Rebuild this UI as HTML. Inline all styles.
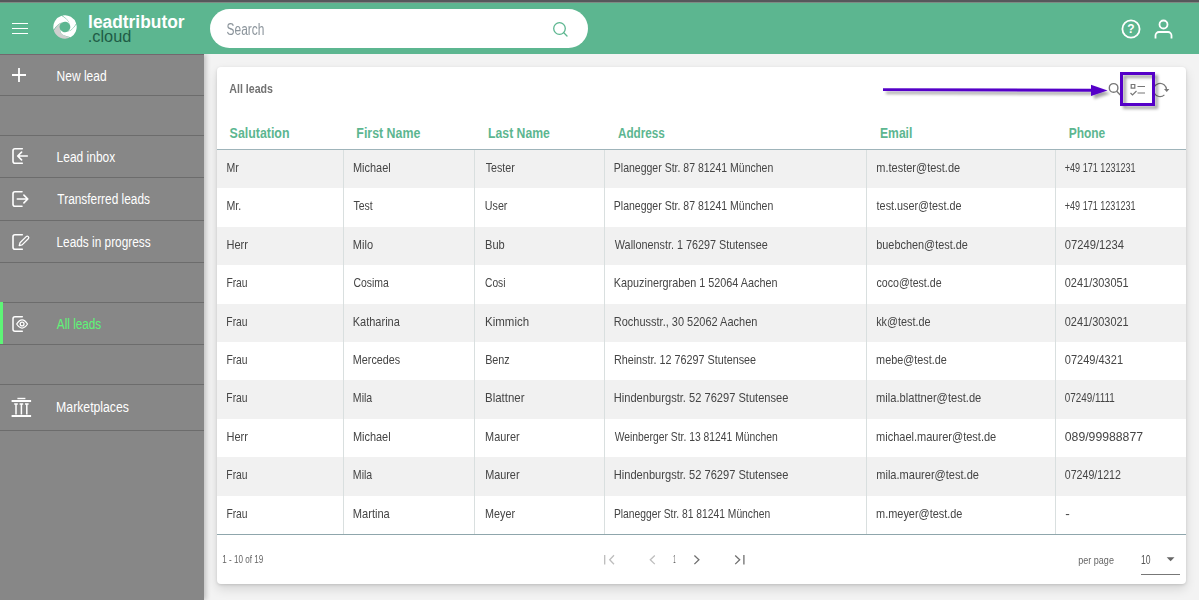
<!DOCTYPE html>
<html lang="en"><head><meta charset="utf-8"><title>leadtributor.cloud - All leads</title>
<style>
*{box-sizing:border-box;margin:0;padding:0}
html,body{width:1199px;height:600px;overflow:hidden}
body{background:#f3f3f3;font-family:"Liberation Sans", sans-serif;position:relative;color:#454545}
.t{display:inline-block;white-space:nowrap;transform-origin:0 50%}
.topstrip{position:absolute;left:0;top:0;width:1199px;height:3px;background:#56575b;border-bottom:1px solid #7f8a84;z-index:6}
header{position:absolute;left:0;top:2px;width:1199px;height:52px;background:#5cb690;z-index:5}
header:after{content:'';position:absolute;left:0;top:51.600px;width:204px;height:1.300px;background:rgba(70,40,60,.32)}
.burger{position:absolute;left:12px;top:20.500px;width:16px;height:12px}
.burger i{position:absolute;left:0;width:16px;height:1.600px;background:#fff}
.logo{position:absolute;left:51.700px;top:12px}
.brand1{position:absolute;left:88.800px;top:9.800px;font-size:18px;font-weight:700;color:#fff;line-height:20px}
.brand2{position:absolute;left:88.800px;top:24.500px;font-size:16px;color:#1f5c46;line-height:20px}
.search{will-change:transform;position:absolute;left:210px;top:7px;width:378px;height:39px;border-radius:20px;background:#fff}
.search .ph{position:absolute;left:16.600px;top:1.300px;line-height:40px;font-size:16px;color:#8b949b}
.search svg{position:absolute;left:340px;top:9.500px}
.hicons svg{position:absolute}
nav{position:absolute;left:0;top:54px;width:204px;height:546px;background:#878787;box-shadow:2px 0 5px rgba(0,0,0,.22);z-index:3}
.nav{position:absolute;left:0;width:204px;display:block;color:#fff;font-size:15.5px}
nav .nav{margin-top:-54px}
.nav .ic{position:absolute;left:3px;top:50%;height:32px;transform:translateY(-50%)}
.nav .lb{position:absolute;left:56.800px;top:0;height:100%;display:flex;align-items:center}
.nav.active{color:#5ef577;border-left:3px solid #5ef577}
.nav.active .ic{left:0}
.nav.active .lb{left:53.800px}
.dv{position:absolute;left:0;width:204px;height:1.200px;background:#6c6c6c;margin-top:-54px}
.card{position:absolute;left:217px;top:67px;width:969px;height:516.500px;background:#fff;border-radius:4px;
  box-shadow:0 1px 3px rgba(0,0,0,.13),0 5px 11px rgba(0,0,0,.12)}
.title{position:absolute;left:12.300px;top:12px;line-height:20px;font-size:13px;font-weight:700;color:#727272}
table{position:absolute;left:0;top:48px;width:969px;display:block;border-collapse:collapse}
thead,tbody{display:block}
tbody,.foot,.title{will-change:transform}
tr{display:flex;width:969px}
th,td{display:flex;align-items:center;flex:0 0 auto;text-align:left}
th:nth-child(1),td:nth-child(1){width:126.300px}
th:nth-child(2),td:nth-child(2){width:130.900px}
th:nth-child(3),td:nth-child(3){width:130.100px}
th:nth-child(4),td:nth-child(4){width:261.900px}
th:nth-child(5),td:nth-child(5){width:188.800px}
th:nth-child(6),td:nth-child(6){width:131px}
thead tr{height:35.200px;border-bottom:1.400px solid #9fb4ba}
th{padding:1.800px 0 0 12.500px;font-size:14px;font-weight:700;color:#5cb690}
tbody tr{height:38.400px}
td{padding:0 0 2.200px 8.800px;font-size:13px;border-left:1px solid #d9dfdf;line-height:16px}
td:first-child{border-left:0;padding-left:9.800px}
tbody tr:nth-child(odd){background:#f1f1f1}
.foot{position:absolute;left:0;top:467px;width:969px;height:49px;border-top:1px solid #8fa6ac}
.foot .t{position:absolute;line-height:14px;font-size:10.500px;color:#666}
.foot svg{position:absolute;left:0;top:0}
.anno{position:absolute;left:0;top:0;z-index:9}
</style></head><body>
<div class="topstrip"></div>
<header>
  <div class="burger"><i style="top:0"></i><i style="top:5px"></i><i style="top:10px"></i></div>
  <svg class="logo" width="26" height="26" viewBox="-13 -13 26 26"><path d="M4.96,10.60 A11.7,11.7 0 0 1 -11.18,3.46 Q-6.92,-3.82 -3.06,-4.33 A5.3,5.3 0 0 0 -4.68,2.50 Q-6.54,7.29 4.96,10.60Z" fill="#cfcfcf"/><path d="M-11.38,2.71 A11.7,11.7 0 0 1 -3.46,-11.18 Q3.82,-6.92 4.33,-3.06 A5.3,5.3 0 0 0 -2.76,-4.52 Q-6.65,-4.27 -11.38,2.71Z" fill="#fff"/><path d="M-2.71,-11.38 A11.7,11.7 0 0 1 11.18,-3.46 Q6.92,3.82 3.06,4.33 A5.3,5.3 0 0 0 4.52,-2.76 Q4.27,-6.65 -2.71,-11.38Z" fill="#fff"/><path d="M11.38,-2.71 A11.7,11.7 0 0 1 5.65,10.24 Q-6.05,7.71 -4.50,2.80 A5.3,5.3 0 0 0 2.76,4.52 Q6.65,4.27 11.38,-2.71Z" fill="#fff"/></svg>
  <div class="brand1"><span class="t" id="t73" style="transform:translateX(-0.93px) scaleX(0.9646);">leadtributor</span></div>
  <div class="brand2"><span class="t" id="t74" style="transform:translateX(-1.26px) scaleX(1.0200);">.cloud</span></div>
  <div class="search"><span class="ph"><span class="t" id="t75" style="transform:translateX(-0.39px) scaleX(0.7451);">Search</span></span>
    <svg width="20" height="20" viewBox="0 0 20 20"><circle cx="9.500" cy="9.500" r="5.800" fill="none" stroke="#5cb690" stroke-width="1.300"/><path d="M13.800 13.800L17 17" stroke="#5cb690" stroke-width="1.300" stroke-linecap="round"/></svg>
  </div>
  <div class="hicons">
    <svg style="left:1120px;top:15.500px" width="22" height="22" viewBox="0 0 22 22"><circle cx="11" cy="11" r="8.600" fill="none" stroke="#fff" stroke-width="1.800"/><text x="11" y="15.300" text-anchor="middle" font-family='"Liberation Sans",sans-serif' font-size="12" font-weight="700" fill="#fff">?</text></svg>
    <svg style="left:1152px;top:14.500px" width="24" height="24" viewBox="0 0 24 24"><g fill="none" stroke="#fff" stroke-width="1.800"><circle cx="11.500" cy="7.500" r="4"/><path d="M3.500 21.500v-3a3.500 3.500 0 0 1 3.500-3.500h9a3.500 3.500 0 0 1 3.500 3.500v3"/></g></svg>
  </div>
</header>
<nav><i class="dv" style="top:95px"></i><i class="dv" style="top:135.3px"></i><i class="dv" style="top:177px"></i><i class="dv" style="top:219.8px"></i><i class="dv" style="top:261.8px"></i><i class="dv" style="top:301.8px"></i><i class="dv" style="top:343.8px"></i><i class="dv" style="top:383.8px"></i><i class="dv" style="top:429.8px"></i><a class="nav" style="top:54px;height:41.5px"><span class="ic" style="margin-top:0px"><svg width="32" height="32" viewBox="0 0 32 32"><path d="M9 16H23M16 9V23" stroke="#fff" stroke-width="1.8" fill="none"/></svg></span><span class="lb" style="margin-top:1.7px"><span class="t" id="t67" style="transform:translateX(-0.42px) scaleX(0.7736);">New lead</span></span></a><a class="nav" style="top:135.8px;height:41.7px"><span class="ic" style="margin-top:-0.7px"><svg width="32" height="32" viewBox="0 0 32 32"><g stroke="#fff" stroke-width="1.6" fill="none" stroke-linecap="round" stroke-linejoin="round"><path d="M19.300 8.700H12a2 2 0 0 0-2 2v10.600a2 2 0 0 0 2 2h7.300"/><path d="M24.300 16H14.800M18.600 12.100l-3.900 3.900 3.900 3.900"/></g></svg></span><span class="lb" style="margin-top:0px"><span class="t" id="t68" style="transform:translateX(-0.39px) scaleX(0.7725);">Lead inbox</span></span></a><a class="nav" style="top:177.5px;height:42.8px"><span class="ic" style="margin-top:0px"><svg width="32" height="32" viewBox="0 0 32 32"><g stroke="#fff" stroke-width="1.6" fill="none" stroke-linecap="round" stroke-linejoin="round"><path d="M19 8.700H12a2 2 0 0 0-2 2v10.600a2 2 0 0 0 2 2h7"/><path d="M14.300 16H24.500M20.900 12.100l3.900 3.900-3.900 3.900"/></g></svg></span><span class="lb" style="margin-top:0px"><span class="t" id="t69" style="transform:translateX(0.37px) scaleX(0.7657);">Transferred leads</span></span></a><a class="nav" style="top:220.3px;height:42px"><span class="ic" style="margin-top:0.6px"><svg width="32" height="32" viewBox="0 0 32 32"><g stroke="#fff" stroke-width="1.6" fill="none" stroke-linecap="round" stroke-linejoin="round"><path d="M19.300 8.700H12a2 2 0 0 0-2 2v10.600a2 2 0 0 0 2 2h7.300"/><path d="M16.200 19.700l.800-2.900 6.200-6.200a1.450 1.450 0 0 1 2.100 2.100l-6.200 6.200z" stroke-width="1.300"/></g></svg></span><span class="lb" style="margin-top:1px"><span class="t" id="t70" style="transform:translateX(-0.54px) scaleX(0.7643);">Leads in progress</span></span></a><a class="nav active" style="top:302.3px;height:42px"><span class="ic" style="margin-top:0.7px"><svg width="32" height="32" viewBox="0 0 32 32"><g stroke="#fff" stroke-width="1.500" fill="none" stroke-linecap="round" stroke-linejoin="round"><path d="M19.300 8.700H12a2 2 0 0 0-2 2v10.600a2 2 0 0 0 2 2h7.300"/><path d="M13.700 16q5.400-8.200 10.800 0q-5.400 8.200-10.800 0z" stroke-width="1.300"/><circle cx="19.100" cy="16" r="1.900" stroke-width="1.300"/></g></svg></span><span class="lb" style="margin-top:0.7px"><span class="t" id="t71" style="transform:translateX(-0.13px) scaleX(0.7574);">All leads</span></span></a><a class="nav" style="top:384.3px;height:46px"><span class="ic" style="margin-top:0px"><svg width="32" height="32" viewBox="1.100 0 32 32"><g stroke="#fff" fill="none"><path d="M15.500 7.500h8" stroke-width="1.400"/><path d="M9.700 10h19.500M9.700 25h19.500" stroke-width="1.800"/><path d="M12.300 13h3.600M17.700 13h3.600M23.100 13h3.600" stroke-width="1.400"/><path d="M14.100 13v10.500M19.500 13v10.500M24.900 13v10.500" stroke-width="1.500"/></g></svg></span><span class="lb" style="margin-top:0px"><span class="t" id="t72" style="transform:translateX(-0.88px) scaleX(0.7898);">Marketplaces</span></span></a></nav>
<main class="card">
  <div class="title"><span class="t" id="t76" style="transform:translateX(0.30px) scaleX(0.8176);">All leads</span></div>
  <table>
        <thead><tr><th><span class="t" id="t1" style="transform:translateX(-0.38px) scaleX(0.8849);">Salutation</span></th><th><span class="t" id="t2" style="transform:translateX(0.34px) scaleX(0.8844);">First Name</span></th><th><span class="t" id="t3" style="transform:translateX(1.11px) scaleX(0.8713);">Last Name</span></th><th><span class="t" id="t4" style="transform:translateX(0.92px) scaleX(0.8378);">Address</span></th><th><span class="t" id="t5" style="transform:translateX(1.02px) scaleX(0.8657);">Email</span></th><th><span class="t" id="t6" style="transform:translateX(1.63px) scaleX(0.8564);">Phone</span></th></tr></thead><tbody><tr><td><span class="t" id="t7" style="transform:translateX(-0.46px) scaleX(0.8100);">Mr</span></td><td><span class="t" id="t8" style="transform:translateX(-0.09px) scaleX(0.8425);">Michael</span></td><td><span class="t" id="t9" style="transform:translateX(1.69px) scaleX(0.8209);">Tester</span></td><td><span class="t" id="t10" style="transform:translateX(-0.18px) scaleX(0.8081);">Planegger Str. 87 81241 München</span></td><td><span class="t" id="t11" style="transform:translateX(0.25px) scaleX(0.8460);">m.tester@test.de</span></td><td><span class="t" id="t12" style="transform:translateX(-0.22px) scaleX(0.6979);">+49 171 1231231</span></td></tr><tr><td><span class="t" id="t13" style="transform:translateX(-0.55px) scaleX(0.8165);">Mr.</span></td><td><span class="t" id="t14" style="transform:translateX(0.49px) scaleX(0.8056);">Test</span></td><td><span class="t" id="t15" style="transform:translateX(0.79px) scaleX(0.8251);">User</span></td><td><span class="t" id="t16" style="transform:translateX(-0.18px) scaleX(0.8080);">Planegger Str. 87 81241 München</span></td><td><span class="t" id="t17" style="transform:translateX(0.61px) scaleX(0.8324);">test.user@test.de</span></td><td><span class="t" id="t18" style="transform:translateX(-0.22px) scaleX(0.6966);">+49 171 1231231</span></td></tr><tr><td><span class="t" id="t19" style="transform:translateX(-0.59px) scaleX(0.8491);">Herr</span></td><td><span class="t" id="t20" style="transform:translateX(-0.21px) scaleX(0.8484);">Milo</span></td><td><span class="t" id="t21" style="transform:translateX(1.02px) scaleX(0.8502);">Bub</span></td><td><span class="t" id="t22" style="transform:translateX(0.82px) scaleX(0.8317);">Wallonenstr. 1 76297 Stutensee</span></td><td><span class="t" id="t23" style="transform:translateX(0.26px) scaleX(0.8375);">buebchen@test.de</span></td><td><span class="t" id="t24" style="transform:translateX(-0.22px) scaleX(0.8626);">07249/1234</span></td></tr><tr><td><span class="t" id="t25" style="transform:translateX(-0.62px) scaleX(0.7940);">Frau</span></td><td><span class="t" id="t26" style="transform:translateX(0.38px) scaleX(0.8035);">Cosima</span></td><td><span class="t" id="t27" style="transform:translateX(1.04px) scaleX(0.7848);">Cosi</span></td><td><span class="t" id="t28" style="transform:translateX(-0.16px) scaleX(0.8324);">Kapuzinergraben 1 52064 Aachen</span></td><td><span class="t" id="t29" style="transform:translateX(0.51px) scaleX(0.8162);">coco@test.de</span></td><td><span class="t" id="t30" style="transform:translateX(-0.21px) scaleX(0.8415);">0241/303051</span></td></tr><tr><td><span class="t" id="t31" style="transform:translateX(-0.64px) scaleX(0.7942);">Frau</span></td><td><span class="t" id="t32" style="transform:translateX(-0.28px) scaleX(0.8470);">Katharina</span></td><td><span class="t" id="t33" style="transform:translateX(1.10px) scaleX(0.8825);">Kimmich</span></td><td><span class="t" id="t34" style="transform:translateX(-0.20px) scaleX(0.8452);">Rochusstr., 30 52062 Aachen</span></td><td><span class="t" id="t35" style="transform:translateX(0.19px) scaleX(0.8329);">kk@test.de</span></td><td><span class="t" id="t36" style="transform:translateX(-0.21px) scaleX(0.8414);">0241/303021</span></td></tr><tr><td><span class="t" id="t37" style="transform:translateX(-0.62px) scaleX(0.7940);">Frau</span></td><td><span class="t" id="t38" style="transform:translateX(-0.14px) scaleX(0.8303);">Mercedes</span></td><td><span class="t" id="t39" style="transform:translateX(1.13px) scaleX(0.8318);">Benz</span></td><td><span class="t" id="t40" style="transform:translateX(-0.10px) scaleX(0.8297);">Rheinstr. 12 76297 Stutensee</span></td><td><span class="t" id="t41" style="transform:translateX(0.12px) scaleX(0.8347);">mebe@test.de</span></td><td><span class="t" id="t42" style="transform:translateX(-0.21px) scaleX(0.8476);">07249/4321</span></td></tr><tr><td><span class="t" id="t43" style="transform:translateX(-0.64px) scaleX(0.7942);">Frau</span></td><td><span class="t" id="t44" style="transform:translateX(-0.15px) scaleX(0.8135);">Mila</span></td><td><span class="t" id="t45" style="transform:translateX(0.99px) scaleX(0.8808);">Blattner</span></td><td><span class="t" id="t46" style="transform:translateX(-0.22px) scaleX(0.8536);">Hindenburgstr. 52 76297 Stutensee</span></td><td><span class="t" id="t47" style="transform:translateX(0.10px) scaleX(0.8547);">mila.blattner@test.de</span></td><td><span class="t" id="t48" style="transform:translateX(-0.17px) scaleX(0.7594);">07249/1111</span></td></tr><tr><td><span class="t" id="t49" style="transform:translateX(-0.59px) scaleX(0.8488);">Herr</span></td><td><span class="t" id="t50" style="transform:translateX(-0.10px) scaleX(0.8427);">Michael</span></td><td><span class="t" id="t51" style="transform:translateX(1.11px) scaleX(0.8378);">Maurer</span></td><td><span class="t" id="t52" style="transform:translateX(0.72px) scaleX(0.7949);">Weinberger Str. 13 81241 München</span></td><td><span class="t" id="t53" style="transform:translateX(0.01px) scaleX(0.8476);">michael.maurer@test.de</span></td><td><span class="t" id="t54" style="transform:translateX(-0.23px) scaleX(0.9413);">089/99988877</span></td></tr><tr><td><span class="t" id="t55" style="transform:translateX(-0.64px) scaleX(0.7942);">Frau</span></td><td><span class="t" id="t56" style="transform:translateX(-0.15px) scaleX(0.8135);">Mila</span></td><td><span class="t" id="t57" style="transform:translateX(1.14px) scaleX(0.8351);">Maurer</span></td><td><span class="t" id="t58" style="transform:translateX(-0.22px) scaleX(0.8536);">Hindenburgstr. 52 76297 Stutensee</span></td><td><span class="t" id="t59" style="transform:translateX(0.24px) scaleX(0.8498);">mila.maurer@test.de</span></td><td><span class="t" id="t60" style="transform:translateX(-0.21px) scaleX(0.8176);">07249/1212</span></td></tr><tr><td><span class="t" id="t61" style="transform:translateX(-0.62px) scaleX(0.7940);">Frau</span></td><td><span class="t" id="t62" style="transform:translateX(-0.21px) scaleX(0.8536);">Martina</span></td><td><span class="t" id="t63" style="transform:translateX(1.10px) scaleX(0.8294);">Meyer</span></td><td><span class="t" id="t64" style="transform:translateX(-0.08px) scaleX(0.7918);">Planegger Str. 81 81241 München</span></td><td><span class="t" id="t65" style="transform:translateX(0.10px) scaleX(0.8396);">m.meyer@test.de</span></td><td><span class="t" id="t66" style="transform:translateX(0.26px) scaleX(1.0467);">-</span></td></tr></tbody>
  </table>
  <div class="foot">
    <span class="t" id="t77" style="transform:translateX(-0.81px) scaleX(0.7713);left:5.600px;top:16.700px">1 - 10 of 19</span>
    <svg width="969" height="49" viewBox="0 0.700 969 49" fill="none" stroke-width="1.300">
      <g stroke="#bdbdbd"><path d="M387.700 20.800v9.400M397 21l-4.300 4.500 4.300 4.500"/><path d="M437.800 21.200l-4.500 4.300 4.500 4.300" /></g>
      <g stroke="#6f6f6f"><path d="M477.400 21.200l4.500 4.300-4.500 4.300"/><path d="M518.200 21.200l4.500 4.300-4.500 4.300M526.900 20.800v9.400"/></g>
      <path d="M949.700 23h7.800l-3.900 4z" fill="#666" stroke="none"/>
      <path d="M924 40.200h39" stroke="#777" stroke-width="1"/>
    </svg>
    <span class="t" id="t78" style="transform:translateX(0.23px) scaleX(0.4091);left:456.300px;top:16.500px;color:#555">1</span>
    <span class="t" id="t79" style="transform:translateX(-0.72px) scaleX(0.8592);left:861.500px;top:18px">per page</span>
    <span class="t" id="t80" style="transform:translateX(-0.01px) scaleX(0.6603);left:924.100px;top:17.800px;font-size:13px;color:#555">10</span>
  </div>
</main>
<svg class="anno" width="1199" height="600" viewBox="0 0 1199 600">
  <defs><filter id="ds" x="-5%" y="-50%" width="115%" height="220%"><feGaussianBlur in="SourceAlpha" stdDeviation="1.700"/><feOffset dx="3" dy="3.200"/><feComponentTransfer><feFuncA type="linear" slope=".36"/></feComponentTransfer><feMerge><feMergeNode/><feMergeNode in="SourceGraphic"/></feMerge></filter></defs>
  <g fill="none" stroke="#777" stroke-width="1.200">
    <circle cx="1113.600" cy="87.900" r="4.300" stroke-width="1.400"/><path d="M1116.700 91.200l3.600 3.800" stroke-width="1.400"/>
    <path d="M1131.200 84.500h3.600v3.600h-3.600z M1137.500 86.500h7.500 M1137.500 93h7.500 M1130.500 93l2 2 4-4"/>
    <path d="M1166.600 90a6.600 6.600 0 1 0-2.200 4.900"/><path d="M1164 89h5.400l-2.700 3z" fill="#777" stroke="none"/>
  </g>
  <g filter="url(#ds)">
    <path d="M883 89.600L1093 90.300" stroke="#5500c8" stroke-width="2.900"/>
    <path d="M1091 84.800L1107.500 90.500L1091 96z" fill="#5500c8"/>
    <rect x="1121.500" y="73.500" width="32" height="31" fill="none" stroke="#5500c8" stroke-width="3"/>
  </g>
</svg>
</body></html>
